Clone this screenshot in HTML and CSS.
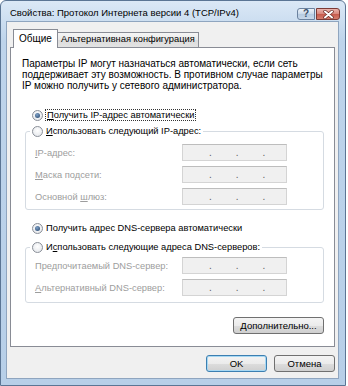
FILE: index.html
```html
<html>

<head>
    <title>Свойства: Протокол Интернета версии 4 (TCP/IPv4)</title>
    <link rel="stylesheet" href="styles.css">
</head>
<body>
<div class="window">
    <div class="titlebar">
        <span class="title">Свойства: Протокол Интернета версии 4 (TCP/IPv4)</span>
        <div class="caption-buttons">
            <span class="cap-btn help">?</span>
            <span class="cap-btn close">
                <svg width="11" height="9" viewBox="0 0 11 9">
                    <path d="M2 1.5 L9 7.5 M9 1.5 L2 7.5" stroke="#6b2a24" stroke-width="3.4" stroke-linecap="round"/>
                    <path d="M2 1.5 L9 7.5 M9 1.5 L2 7.5" stroke="#fff" stroke-width="2" stroke-linecap="round"/>
                </svg>
            </span>
        </div>
    </div>
    <div class="client">
        <div class="tabs">
            <span class="tab active">Общие</span>
            <span class="tab">Альтернативная конфигурация</span>
        </div>
        <div class="panel">
            <p class="intro">Параметры IP могут назначаться автоматически, если сеть<br>поддерживает эту возможность. В противном случае параметры<br>IP можно получить у сетевого администратора.</p>

            <label class="radio first">
                <span class="dot checked"></span>
                <span class="focus"><u>П</u>олучить IP-адрес автоматически</span>
            </label>

            <fieldset class="group ip-group">
                <legend>
                    <label class="radio">
                        <span class="dot"></span>
                        <span><u>И</u>спользовать следующий IP-адрес:</span>
                    </label>
                </legend>
                <div class="field">
                    <span class="field-label"><u>I</u>P-адрес:</span>
                    <span class="ipbox"><i></i>.<i></i>.<i></i>.<i></i></span>
                </div>
                <div class="field">
                    <span class="field-label"><u>М</u>аска подсети:</span>
                    <span class="ipbox"><i></i>.<i></i>.<i></i>.<i></i></span>
                </div>
                <div class="field">
                    <span class="field-label">Основной <u>ш</u>люз:</span>
                    <span class="ipbox"><i></i>.<i></i>.<i></i>.<i></i></span>
                </div>
            </fieldset>

            <label class="radio dns-auto">
                <span class="dot checked"></span>
                <span>Получить адрес DNS-сервера автоматически</span>
            </label>

            <fieldset class="group dns-group">
                <legend>
                    <label class="radio">
                        <span class="dot"></span>
                        <span>И<u>с</u>пользовать следующие адреса DNS-серверов:</span>
                    </label>
                </legend>
                <div class="field">
                    <span class="field-label">Пре<u>д</u>почитаемый DNS-сервер:</span>
                    <span class="ipbox"><i></i>.<i></i>.<i></i>.<i></i></span>
                </div>
                <div class="field">
                    <span class="field-label"><u>А</u>льтернативный DNS-сервер:</span>
                    <span class="ipbox"><i></i>.<i></i>.<i></i>.<i></i></span>
                </div>
            </fieldset>

            <div class="advanced-row">
                <button type="button" class="btn"><u>Д</u>ополнительно...</button>
            </div>
        </div>
        <div class="dialog-buttons">
            <button type="button" class="btn default">OK</button>
            <button type="button" class="btn">Отмена</button>
        </div>
    </div>
</div>
</body>
</html>
```

FILE: styles.css
```css
html, body {
    margin: 0;
    background-color: #fff;
    color: #000;
    font-family: "Liberation Sans", Arial, sans-serif;
    font-size: 9.3px;
}

.window {
    width: 346px;
    height: 386px;
    box-sizing: border-box;
    border: 1px solid #5b7594;
    border-radius: 6px 6px 0 0;
    background: linear-gradient(#dbe8f6, #bed4eb 40px, #b7cfe8);
    padding: 0 6px 6px 5px;
    display: flex;
    flex-direction: column;
}

.titlebar {
    height: 20px;
    display: flex;
    align-items: center;
    justify-content: space-between;
    padding-top: 2px;
    box-sizing: border-box;
}

.title {
    padding-left: 4px;
    font-size: 9.5px;
    color: #000;
}

.caption-buttons {
    display: flex;
    margin-right: -1px;
    margin-top: 4px;
}

.cap-btn {
    height: 12px;
    box-sizing: border-box;
    border: 1px solid #6b829f;
    display: flex;
    align-items: center;
    justify-content: center;
}

.help {
    width: 18px;
    border-radius: 3px 0 0 3px;
    background: linear-gradient(#eef4fa, #c9d9ea 50%, #b6cbe2 51%, #c7d8ea);
    font-size: 10px;
    font-weight: bold;
    color: #3a4f69;
    line-height: 10px;
}

.close {
    width: 24px;
    margin-left: 1px;
    border-color: #7b3a35;
    border-radius: 0 3px 3px 0;
    background: linear-gradient(#eab5ae, #d9867b 50%, #c65a4c 51%, #d57c6c);
}

.client {
    flex: 1;
    background-color: #f0f0f0;
    border: 1px solid #8fa5bf;
    padding: 7px 3px 6px 3px;
    display: flex;
    flex-direction: column;
}

/* tabs */
.tabs {
    display: flex;
    align-items: flex-end;
    height: 18px;
    padding-left: 3px;
}

.tab {
    height: 15px;
    box-sizing: border-box;
    border: 1px solid #898c95;
    border-bottom: none;
    background: linear-gradient(#f5f5f5, #e9e9e9 50%, #dcdcdc 51%, #e3e3e3);
    padding: 0 3px;
    margin-left: -1px;
    line-height: 13px;
}

.tab.active {
    height: 19px;
    margin-bottom: -1px;
    margin-left: 0;
    background: #fff;
    padding: 0 5px;
    line-height: 18px;
    font-size: 10px;
    position: relative;
    z-index: 1;
}

.panel {
    flex: 1;
    background: #fff;
    border: 1px solid #898c95;
    padding: 10px 10px 0 11px;
}

.intro {
    margin: 0;
    font-size: 10px;
    line-height: 11px;
    white-space: nowrap;
}

.radio {
    display: flex;
    align-items: center;
    height: 14px;
    white-space: nowrap;
}

.radio.first {
    margin: 17px 0 2px 10px;
}

.radio.dns-auto {
    margin: 11px 0 5px 10px;
}

.dot {
    width: 11px;
    height: 11px;
    box-sizing: border-box;
    border-radius: 50%;
    border: 1px solid #8a8f98;
    background: radial-gradient(circle at 50% 40%, #fff, #e0e3e8);
    margin-right: 3px;
    position: relative;
}

.dot.checked::after {
    content: "";
    position: absolute;
    left: 2px;
    top: 2px;
    width: 5px;
    height: 5px;
    border-radius: 50%;
    background: radial-gradient(circle at 40% 35%, #7fa2c8, #203f66);
}

.focus {
    outline: 1px dotted #333;
    outline-offset: 0;
    padding: 0 1px;
}

u {
    text-decoration: underline;
    text-underline-offset: 1px;
}

/* group boxes */
.group {
    margin: 0 0 0 3px;
    border: 1px solid #d5dbe2;
    border-radius: 3px;
    padding: 0 8px 4px 9px;
}

.group legend {
    padding: 0 2px;
    margin-left: -5px;
}

.ip-group .field:first-of-type {
    margin-top: 6px;
}

.dns-group .field:first-of-type {
    margin-top: 3px;
}

.dns-group {
    padding-bottom: 6px;
}

.field {
    display: flex;
    align-items: center;
    height: 17px;
    margin-top: 5px;
    color: #9d9d9d;
    white-space: nowrap;
}

.field-label {
    width: 147px;
    flex-shrink: 0;
}

.ipbox {
    width: 105px;
    height: 17px;
    box-sizing: border-box;
    border: 1px solid #d4d4d4;
    border-top-color: #bdbdbd;
    background: #f0f0f0;
    display: flex;
    align-items: flex-end;
    padding: 0 0 2px 2px;
    color: #5f5f5f;
    font-size: 10px;
    line-height: 10px;
}

.ipbox i {
    width: 24px;
}

.ipbox i:last-child {
    width: 20px;
}

/* buttons */
.btn {
    height: 17px;
    box-sizing: border-box;
    border: 1px solid #707070;
    border-radius: 3px;
    background: linear-gradient(#f4f4f4, #ebebeb 50%, #dddddd 51%, #cfcfcf);
    font-family: "Liberation Sans", Arial, sans-serif;
    font-size: 9.5px;
    color: #000;
    padding: 0;
    line-height: 14px;
}

.advanced-row {
    display: flex;
    justify-content: flex-end;
    margin: 14px 0 0 0;
}

.advanced-row .btn {
    width: 91px;
}

.dialog-buttons {
    display: flex;
    justify-content: flex-end;
    gap: 7px;
    margin-top: 8px;
}

.dialog-buttons .btn {
    width: 61px;
}

.btn.default {
    border-color: #3c7fb1;
    box-shadow: inset 0 0 0 1px #a7d8f3;
}
```
